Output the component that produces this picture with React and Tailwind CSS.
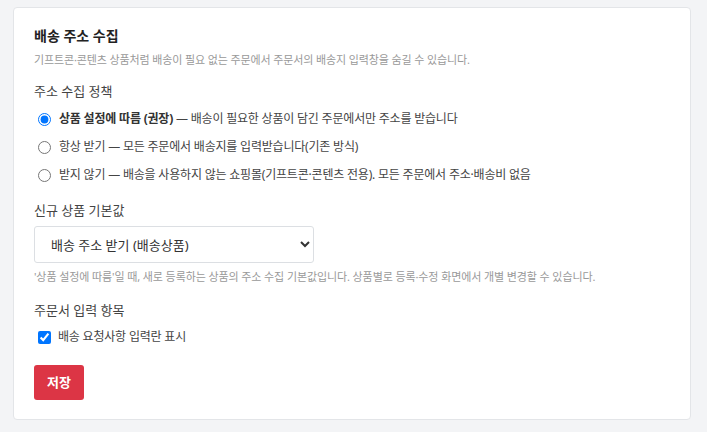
import React from "react";

export default function App() {
  return (
    <div className="min-h-[432px] bg-[#f3f4f6] pl-[13px] pr-[16px] pt-[7px] pb-[13px] font-['Noto_Sans','Noto_Sans_CJK_KR',sans-serif]">
      <div className="rounded-[4px] border border-[#e3e5e8] bg-white px-[20px] pt-[17px] pb-[19px] text-[#333]">
        <h2 className="text-[14px] font-bold leading-[22px] text-[#222]">배송 주소 수집</h2>
        <p className="mt-[4px] text-[11px] leading-[18px] tracking-[-0.12px] text-[#999]">
          기프트콘·콘텐츠 상품처럼 배송이 필요 없는 주문에서 주문서의 배송지 입력창을 숨길 수 있습니다.
        </p>

        <div className="mt-[12px] text-[13px] leading-[20px] text-[#444]">주소 수집 정책</div>
        <div className="mt-[8px] flex flex-col gap-[8px] pl-[4px] text-[12px] leading-[20px] tracking-[-0.2px] text-[#444]">
          <label className="flex items-center gap-[8px]">
            <input type="radio" name="p" defaultChecked className="m-0 h-[13px] w-[13px]" />
            <span>
              <b className="font-bold text-[#333]">상품 설정에 따름 (권장)</b> — 배송이 필요한 상품이 담긴 주문에서만 주소를 받습니다
            </span>
          </label>
          <label className="flex items-center gap-[8px]">
            <input type="radio" name="p" className="m-0 h-[13px] w-[13px]" />
            <span>항상 받기 — 모든 주문에서 배송지를 입력받습니다(기존 방식)</span>
          </label>
          <label className="flex items-center gap-[8px]">
            <input type="radio" name="p" className="m-0 h-[13px] w-[13px]" />
            <span>받지 않기 — 배송을 사용하지 않는 쇼핑몰(기프트콘·콘텐츠 전용). 모든 주문에서 주소·배송비 없음</span>
          </label>
        </div>

        <div className="mt-[15px] text-[13px] leading-[20px] text-[#444]">신규 상품 기본값</div>
        <select
          defaultValue="a"
          className="mt-[6px] block h-[37px] w-[280px] rounded-[3px] border border-[#dcdfe3] bg-white pl-[12px] pr-[6px] text-[13px] text-[#333]"
        >
          <option value="a">배송 주소 받기 (배송상품)</option>
          <option value="b">배송 주소 받지 않기</option>
        </select>
        <p className="mt-[6px] text-[11px] leading-[16px] tracking-[-0.1px] text-[#999]">
          '상품 설정에 따름'일 때, 새로 등록하는 상품의 주소 수집 기본값입니다. 상품별로 등록·수정 화면에서 개별 변경할 수 있습니다.
        </p>

        <div className="mt-[15px] text-[13px] leading-[20px] text-[#444]">주문서 입력 항목</div>
        <label className="mt-[7px] flex items-center gap-[7px] pl-[4px] text-[12px] leading-[20px] tracking-[-0.2px] text-[#444]">
          <input type="checkbox" defaultChecked className="m-0 h-[13px] w-[13px]" />
          <span>배송 요청사항 입력란 표시</span>
        </label>

        <button className="mt-[18px] h-[35px] w-[50px] rounded-[3px] bg-[#dc3545] text-[13px] font-bold text-white">
          저장
        </button>
      </div>
    </div>
  );
}
